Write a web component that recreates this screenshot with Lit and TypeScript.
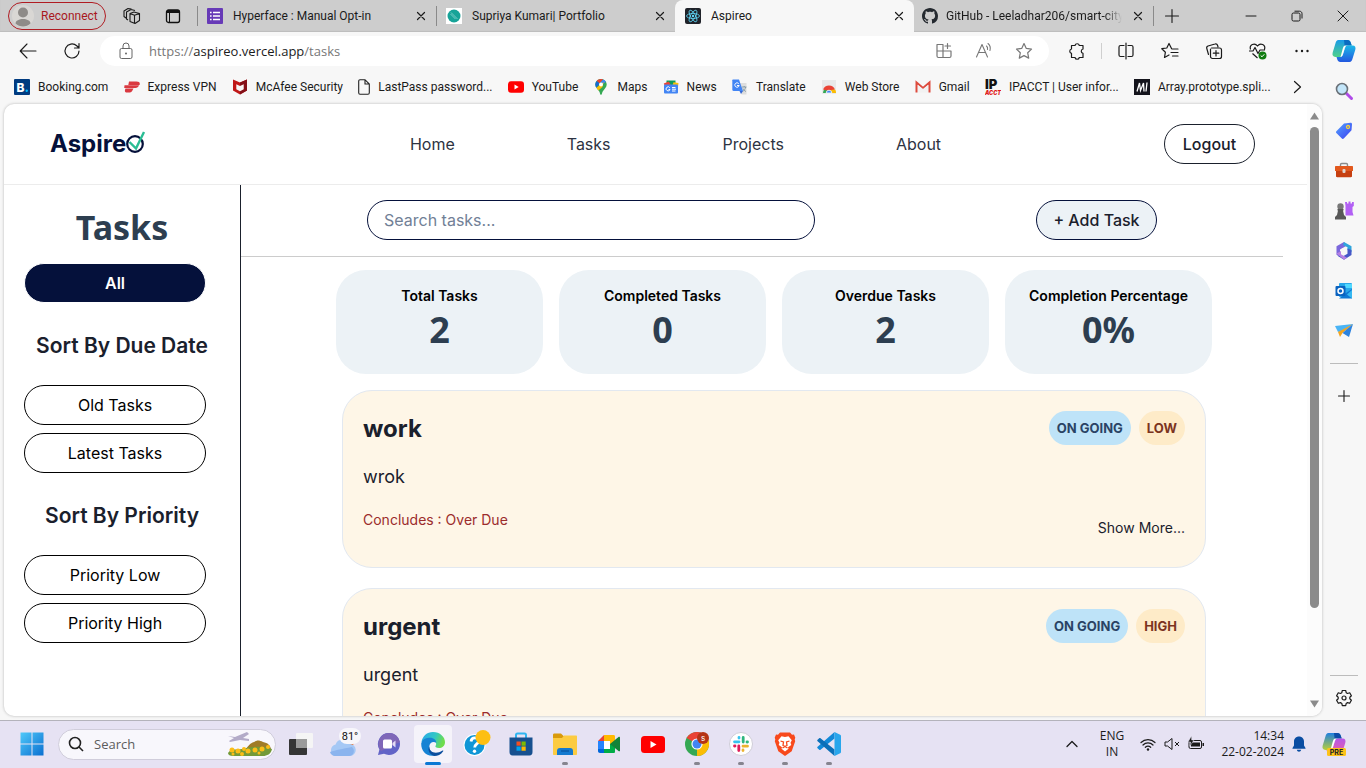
import { LitElement, html, css, svg, TemplateResult } from "lit";
import { customElement, property } from "lit/decorators.js";

const icon = (w: number, h: number, vb: string, body: unknown) =>
  html`<svg width=${w} height=${h} viewBox=${vb} fill="none" aria-hidden="true" style="display:block;flex:none">${body}</svg>`;
const line = (size: number, d: string, color = "#1b1b1b", vb = "0 0 20 20", sw = 1.2) =>
  icon(size, size, vb, svg`<path d=${d} stroke=${color} stroke-width=${sw} stroke-linecap="round" stroke-linejoin="round"/>`);

const closeX = () => line(16, "M4.500 4.500l7 7M11.500 4.500l-7 7", "#1b1b1b", "0 0 16 16", 1.2);

const copilot = (size: number, a: string[], extra: unknown = "") => icon(size, size, "0 0 24 24", svg`
  <defs>
    <linearGradient id="cpa" x1="0" y1="0" x2="0" y2="1"><stop offset="0" stop-color=${a[0]}/><stop offset="1" stop-color=${a[1]}/></linearGradient>
    <linearGradient id="cpb" x1="0" y1="0" x2="0" y2="1"><stop offset="0" stop-color=${a[2]}/><stop offset="1" stop-color=${a[3]}/></linearGradient>
  </defs>
  <path d="M6.500 1h9.200c1.600 0 2.500 1 3 2.400l1 3.100h-3.400c-2 0-2.900.8-3.500 2.600l-2 6.400c-.6 1.800-1.600 2.500-3.300 2.500H3.400C.8 18 0 15.900.7 13.600L3.500 4.200C4 2.300 4.700 1 6.500 1z" fill="url(#cpa)"/>
  <path d="M12 1h3.700c1.600 0 2.500 1 3 2.400l1 3.100h-3.400c-2 0-2.900.8-3.500 2.600z" fill=${a[4]}/>
  <path d="M17.500 23H8.300c-1.600 0-2.500-1-3-2.400L4.500 18h3c1.700 0 2.700-.7 3.300-2.500l2-6.400c.6-1.800 1.500-2.600 3.500-2.600h4.300c2.600 0 3.400 2 2.700 4.300l-2.800 9C20 21.700 19.300 23 17.500 23z" fill="url(#cpb)"/>
  <path d="M12.800 6.500h3.600c-2 0-2.900.8-3.500 2.600l-2 6.400c-.5 1.600-1.200 2.300-2.400 2.500l2.300-8.500c.5-1.600 1-2.400 2-3z" fill="#fff"/>${extra}`);

const fav = {
  forms: icon(16, 16, "0 0 16 16", svg`<rect width="16" height="16" rx="1" fill="#673ab7"/><path d="M3 4.500h1.600M3 8h1.600M3 11.500h1.600M6 4.500h7M6 8h7M6 11.500h7" stroke="#fff" stroke-width="1.500"/>`),
  portfolio: icon(16, 16, "0 0 16 16", svg`<rect width="16" height="16" fill="#fff"/><circle cx="8" cy="8" r="6.500" fill="#17a398"/><path d="M5 4.500l6.500 6.500M4.500 6l5 5" stroke="#8fd8d2" stroke-width=".8"/>`),
  react: icon(16, 16, "0 0 16 16", svg`<rect width="16" height="16" rx="2" fill="#20232a"/><g stroke="#61dafb" stroke-width=".8"><ellipse cx="8" cy="8" rx="6.500" ry="2.500"/><ellipse cx="8" cy="8" rx="6.500" ry="2.500" transform="rotate(60 8 8)"/><ellipse cx="8" cy="8" rx="6.500" ry="2.500" transform="rotate(120 8 8)"/></g><circle cx="8" cy="8" r="1.200" fill="#61dafb"/>`),
  github: icon(16, 16, "0 0 16 16", svg`<path fill="#24292f" d="M8 0C3.580 0 0 3.580 0 8c0 3.540 2.290 6.530 5.470 7.590.4.070.55-.17.55-.38 0-.19-.01-.82-.01-1.490-2.010.37-2.530-.49-2.690-.94-.09-.23-.48-.94-.82-1.130-.28-.15-.68-.52-.01-.53.63-.01 1.080.58 1.230.82.72 1.210 1.870.87 2.330.66.070-.52.28-.87.51-1.070-1.780-.2-3.640-.89-3.640-3.950 0-.87.31-1.590.82-2.150-.08-.2-.36-1.020.08-2.120 0 0 .67-.21 2.200.82.64-.18 1.320-.27 2-.27s1.360.09 2 .27c1.530-1.040 2.200-.82 2.200-.82.44 1.100.16 1.920.08 2.120.51.56.82 1.270.82 2.150 0 3.070-1.870 3.750-3.650 3.950.29.25.54.73.54 1.480 0 1.070-.01 1.930-.01 2.200 0 .21.15.46.55.38A8 8 0 0 0 16 8c0-4.420-3.580-8-8-8z"/>`),
};

const bm: Array<[string, TemplateResult]> = [
  ["Booking.com", icon(16, 16, "0 0 16 16", svg`<rect width="16" height="16" rx="1" fill="#003b80"/><text x="2.500" y="12.500" font-family="Inter, sans-serif" font-size="12" font-weight="800" fill="#fff">B</text><circle cx="12.700" cy="11.700" r="1.200" fill="#00baff"/>`)],
  ["Express VPN", icon(16, 16, "0 0 16 16", svg`<path d="M5 2.500h7.500c3 0 3.800 1.500 3 3.500H4.300zM.5 6.200H15c-.6 1.900-1.800 2.700-3.600 2.700H.2zM1.500 9.500h8c-1 1.500-1.500 3.800-3.500 4H3C.5 13.500.5 11.500 1.500 9.500z" fill="#da3940"/>`)],
  ["McAfee Security", icon(16, 16, "0 0 16 16", svg`<path d="M1 .5l7 3 7-3v11L8 15.500l-7-4z" fill="#c01818"/><path d="M8 3.500l7-3v11L8 15.500V12l3.500-1.800V5.500L8 7.200z" fill="#841018"/><path d="M4.300 5.200L8 7l3.700-1.800v5L8 12.200l-3.700-2z" fill="#f7f7f7"/>`)],
  ["LastPass password...", icon(12, 16, "0 0 12 16", svg`<path d="M2 .7h5l4.300 4.300v8.800c0 .9-.5 1.500-1.300 1.500H2c-.8 0-1.300-.6-1.300-1.500V2.200C.7 1.300 1.200.7 2 .7zM7 .7V5h4.300" stroke="#222" stroke-width="1.100"/>`)],
  ["YouTube", icon(16, 16, "0 0 16 16", svg`<rect y="2.300" width="16" height="11.400" rx="3" fill="#f00"/><path d="M6.500 5.500v5l4.200-2.500z" fill="#fff"/>`)],
  ["Maps", icon(16, 16, "0 0 16 16", svg`<path d="M8 0C4.600 0 2.300 2.600 2.300 5.600c0 3 2.300 4.200 4 7 .7 1.200.8 3.400 1.700 3.400s1-2.200 1.700-3.400c1.700-2.800 4-4 4-7C13.700 2.600 11.400 0 8 0z" fill="#34a853"/><path d="M8 0C6.300 0 4.700.7 3.700 1.900l3 2.600L10 .4C9.400.1 8.700 0 8 0z" fill="#ea4335"/><path d="M10 .4L6.700 4.500 10 5l3-2.300C12.300 1.600 11.300.8 10 .4z" fill="#4285f4"/><path d="M3.700 1.900C1.800 4.200 2 6.500 3.400 8.800l3.300-4.300z" fill="#1967d2"/><path d="M3.400 8.800L10.500 3l-1 5-4.200 3.500z" fill="#fbbc04"/><circle cx="8" cy="5.500" r="2" fill="#fff"/>`)],
  ["News", icon(16, 16, "0 0 16 16", svg`<path d="M3.500 1.500h9V8h-9z" fill="#0c9d58"/><path d="M.8 4.500l5-2 3 5H2z" fill="#ea4335"/><path d="M15.500 4l-5-.8L9 8h6z" fill="#ffc107"/><rect x="1" y="5.500" width="14" height="9" rx="1" fill="#4285f4"/><path d="M6.800 8.800a2 2 0 1 0 .2 1.700H5.500M9 8.500h3.500M9 10.200h4M9 12h3.500" stroke="#fff"/>`)],
  ["Translate", icon(16, 16, "0 0 16 16", svg`<path d="M7 4h7.500v11.500H9.500z" fill="#dedede"/><path d="M10 8h4.500M12.200 7v1M13.700 8c-.5 2-1.500 3.500-3 4.500M11 9.500c.6 1.400 1.700 2.500 3 3" stroke="#78909c" stroke-width=".8"/><path d="M1 .5h6l4 11.500H1.500C.7 12 .3 11.500.3 10.800V1.300C.3.800.5.500 1 .5z" fill="#4285f4"/><path d="M7.500 12H11l-2 3z" fill="#3367d6"/><path d="M6.800 4.700a2.200 2.200 0 1 0 .4 1.800H5" stroke="#fff" stroke-width="1"/>`)],
  ["Web Store", icon(16, 16, "0 0 16 16", svg`<rect x="1" y="1" width="14" height="14" fill="#e9e9e9"/><path d="M2 14a6 6 0 0 1 12 0z" fill="#34a853"/><path d="M2 10.500a6.500 6.500 0 0 1 12 0L8 12z" fill="#ea4335"/><path d="M14 10.500c.8 1 1 2 1 3.500H9l1-3z" fill="#fbbc04"/><path d="M5.200 14a2.800 2.800 0 0 1 5.600 0z" fill="#4285f4" stroke="#fff" stroke-width=".8"/>`)],
  ["Gmail", icon(16, 16, "0 0 16 16", svg`<path d="M1.500 13.500v-10L8 9l6.500-5.500v10" stroke="#dd4b3e" stroke-width="2"/><path d="M3 13.500V6l5 4 5-4v7.500z" fill="#f2f2f2"/>`)],
  ["IPACCT | User infor...", icon(16, 16, "0 0 16 16", svg`<text x="0" y="10" font-family="Inter, sans-serif" font-size="13" font-weight="900" fill="#111">IP</text><text x="0" y="15.800" font-family="Inter, sans-serif" font-size="5.500" font-style="italic" font-weight="900" fill="#e01818">ACCT</text>`)],
  ["Array.prototype.spli...", icon(16, 16, "0 0 16 16", svg`<rect width="16" height="16" fill="#14141c"/><path d="M3 12.500L5.500 4l1 7.500L9.500 4l.5 8.500M13 3.500l-1 9" stroke="#fff" stroke-width="1.300"/>`)],
];

const side = [
  icon(20, 20, "0 0 20 20", svg`<path d="M12 12l5.500 5.500" stroke="#b04be8" stroke-width="3" stroke-linecap="round"/><circle cx="8" cy="8" r="5.500" fill="#c3e6fa" stroke="#6a7178" stroke-width="1.600"/>`),
  icon(20, 20, "0 0 20 20", svg`<defs><linearGradient id="tg" x1="0" y1="0" x2="1" y2="1"><stop stop-color="#55a4ff"/><stop offset="1" stop-color="#3b3ff0"/></linearGradient></defs><path d="M10 2.500l6.500-.7c1 0 1.500.5 1.500 1.500l-.5 6-7.500 8c-.8.8-1.600.8-2.400 0l-5-5c-.8-.8-.8-1.600 0-2.400z" fill="url(#tg)"/><circle cx="14" cy="6" r="1.500" fill="#4a5ff0" stroke="#f6d53a" stroke-width="1.300"/>`),
  icon(20, 20, "0 0 20 20", svg`<path d="M6.500 6V3.700c0-.7.5-1.200 1.200-1.200h4.600c.7 0 1.200.5 1.200 1.200V6" stroke="#8b8b8b" stroke-width="1.400"/><path d="M2 5h16c.6 0 1 .4 1 1v4H1V6c0-.6.4-1 1-1z" fill="#e2581d"/><path d="M2 10h16v5c0 .8-.5 1.200-1.200 1.200H3.200C2.500 16.200 2 15.800 2 15z" fill="#c63f10"/><rect x="8.500" y="8" width="3" height="4" rx="1" fill="#ded5cf"/>`),
  icon(20, 20, "0 0 20 20", svg`<path d="M11 1h2v1.500h1.500V.500h2v2H18V1h1.800v4l-1.300 1v5l1 3.500h-8V5z" fill="#b260f4"/><circle cx="6.500" cy="5.500" r="3.200" fill="#777"/><path d="M3.500 8h6v1.500H9l1 4.500 2 2v2.500H1V16l2-2 1-4.500h-.5z" fill="#585858"/>`),
  icon(20, 20, "0 0 20 20", svg`<path d="M10 1L2.500 5.300v8.500L6 16V8.500L13 4.500z" fill="#7b67dc"/><path d="M10 1l7.500 4.300v6L13.500 9V6.200L9 4z" fill="#2fa5dc"/><path d="M17.500 9v5L10 18.800l-6.500-4 6 .2 4-2.200V7.500z" fill="#4557c7"/><path d="M2.500 12.500L10 18.800l3-2-6-3.600V10z" fill="#b580e3"/><circle cx="10" cy="10" r="3" fill="#f7f7f7"/>`),
  icon(20, 20, "0 0 20 20", svg`<rect x="5" y="2" width="13" height="14" rx="1" fill="#28a8ea"/><path d="M11 3h7v4h-7z" fill="#50d9ff"/><path d="M12 12l6-4v9.500H5z" fill="#0f78d4"/><path d="M18 9v8.500l-5-4z" fill="#35b8f1"/><rect x="1.500" y="5" width="10" height="10" rx="1" fill="#0a63c0"/><circle cx="6.500" cy="10" r="2.500" stroke="#fff" stroke-width="1.500"/>`),
  icon(20, 20, "0 0 20 20", svg`<path d="M1 5l18-2-7 6-8 2z" fill="#4ab4f5"/><path d="M4 11L19 3 8.500 12l-2.500 4z" fill="#f5a51f"/><path d="M8.500 12L19 3l-4 13z" fill="#2c83e0"/>`),
];

const edgeLogo = icon(24, 24, "0 0 24 24", svg`<defs><linearGradient id="eg" x1="0" y1="0" x2="1" y2="0.300"><stop stop-color="#2aa5ec"/><stop offset=".6" stop-color="#30c7c5"/><stop offset="1" stop-color="#6fdd4d"/></linearGradient></defs><path d="M.5 10C1.500 4 6 0 12 0c7 0 12 5 12 10 0 4-3 6-6 6-3 0-4-1.200-3.500-2 2-2.500-.5-6-4.500-6C5.500 8 2 9 .5 10z" fill="url(#eg)"/><path d="M.2 11.500C1.500 6.500 6 5.800 9 5.800c4 0 6.500 2.700 6.300 5C12 8.500 8 11 8.300 15c.3 4.500 4.700 8 9.200 7C8 27 0 21 .2 11.500z" fill="#1683d4"/><path d="M8.300 14.500c-.5 5.500 6.500 8.500 13.200 4 .6-.3 1 .2.7.7C20 22.500 16.500 24 13.500 24 9 23 6 18 8.300 14.500z" fill="#0c4f9e"/>`);

const taskApps: Array<[string, TemplateResult, boolean]> = [
  ["Task view", icon(24, 24, "0 0 24 24", svg`<rect x="7" y="1" width="17" height="15" rx="1" fill="#f5f5f5"/><rect y="7" width="18" height="16" rx="1" fill="#363636"/><path d="M7 7h11v9H7z" fill="#9b9b9b"/>`), false],
  ["Get help", icon(28, 28, "0 0 28 28", svg`<circle cx="11.500" cy="15" r="11" fill="#fff"/><circle cx="11.500" cy="15" r="10" fill="#0f96d6"/><path d="M8 11.500c.5-5 8-4.500 7.500 0-.3 2.500-3.800 2.500-3.800 6" stroke="#fff" stroke-width="2.800"/><circle cx="11.500" cy="21.300" r="1.700" fill="#fff"/><circle cx="20" cy="7.500" r="7.500" fill="#fdbf12"/>`), false],
  ["Store", icon(24, 24, "0 0 24 24", svg`<path d="M7 6V3c0-1 .5-1.500 1.500-1.500h7c1 0 1.500.5 1.500 1.500v3" stroke="#2fb5f0" stroke-width="2"/><path d="M.5 5.500h23V20c0 2-1 3.500-3 3.500h-17c-2 0-3-1.500-3-3.500z" fill="#17508f"/><path d="M7.500 9.500h4.200v4.200H7.500z" fill="#f25022"/><path d="M12.500 9.500h4.200v4.200h-4.200z" fill="#7fba00"/><path d="M7.500 14.500h4.200v4.200H7.500z" fill="#00a4ef"/><path d="M12.500 14.500h4.200v4.200h-4.200z" fill="#ffb900"/>`), false],
  ["File Explorer", icon(24, 24, "0 0 24 24", svg`<path d="M0 3c0-1 .5-1.500 1.500-1.500H8L10.500 4H22v6H0z" fill="#d99a0b"/><path d="M0 6h9l2-2.500h12c.6 0 1 .4 1 1V22c0 .6-.4 1-1 1H1c-.6 0-1-.4-1-1z" fill="#fccb41"/><path d="M4 23v-4c0-2 1-3 3-3h10c2 0 3 1 3 3v4z" fill="#1479cf"/><path d="M8 19h8" stroke="#0a5ba8" stroke-width="1.500"/>`), true],
  ["Meet", icon(24, 24, "0 0 24 24", svg`<path d="M1 9l6-6v6z" fill="#ea4335"/><path d="M1 9h6v8H1z" fill="#2684fc"/><path d="M1 17h6v4H3c-1.200 0-2-.8-2-2z" fill="#0066da"/><path d="M7 3h9.500c1 0 1.500.6 1.500 1.500V12h-5V9H7z" fill="#ffba00"/><path d="M7 17h6v-5h5v7.500c0 1-.5 1.500-1.500 1.500H7z" fill="#00ac47"/><path d="M13 12l8.500-7c.8-.6 1.500-.3 1.500.6v12.800c0 .9-.7 1.200-1.500.6z" fill="#128338"/><path d="M7 9h6v8H7z" fill="#fff"/>`), false],
  ["YouTube", icon(24, 24, "0 0 24 24", svg`<rect y="4" width="24" height="17" rx="3.500" fill="#f00"/><path d="M9.500 9v7l6-3.500z" fill="#fff"/>`), false],
  ["Chrome", icon(24, 24, "0 0 24 24", svg`<circle cx="12" cy="12" r="12" fill="#34a853"/><path d="M12 12L1.600 6A12 12 0 0 1 22.400 6z" fill="#ea4335"/><path d="M12 12l10.400-6A12 12 0 0 1 12 24z" fill="#fbbc04"/><circle cx="12" cy="12" r="5.600" fill="#fff"/><circle cx="12" cy="12" r="4.500" fill="#4285f4"/><circle cx="18" cy="6" r="6" fill="#b53416"/><text x="18" y="9" text-anchor="middle" font-size="8" font-family="Inter, sans-serif" fill="#fff">s</text>`), true],
  ["Slack", icon(24, 24, "0 0 24 24", svg`<circle cx="12" cy="12" r="11.500" fill="#fff" stroke="#cfcdd8"/><g stroke-width="2.800" stroke-linecap="round"><path d="M10 9.800H5.500M10 5.500v.5" stroke="#36c5f0"/><path d="M14.200 10V5.500M18.500 10H18" stroke="#2eb67d"/><path d="M14 14.200h4.500M14 18.500V18" stroke="#ecb22e"/><path d="M9.800 14v4.500M5.500 14H6" stroke="#e01e5a"/></g>`), true],
  ["Brave", icon(24, 24, "0 0 24 24", svg`<path d="M7 .5h10l2 2.200 2-.2 1.300 3.200-.6 1.800.5 1.800-3.500 10L12 24l-6.700-4.700-3.500-10 .5-1.800-.6-1.800L3 2.500l2 .2z" fill="#f8491c"/><path d="M12 5l3.500-.8 3.300 4-1.300 2.500.8 2.300-3.300 2.300.5 1.500L12 19.500l-3.500-2.700.5-1.500L5.700 13l.8-2.300-1.300-2.500 3.300-4z" fill="#fff"/><path d="M7.500 9l3 1-.5 3.500 2 1 2-1-.5-3.500 3-1M9.500 16l2.500-1.500 2.500 1.500" stroke="#f8491c" stroke-width="1.300"/>`), true],
  ["Visual Studio Code", icon(24, 24, "0 0 24 24", svg`<path d="M17.500 0v6.500L3.500 17.800c-.4.300-.9.300-1.300 0L.6 16.300c-.5-.4-.5-1.100 0-1.500z" fill="#1289d8"/><path d="M17.500 24v-6.500L3.500 6.200c-.4-.3-.9-.3-1.300 0L.6 7.700c-.5.4-.5 1.100 0 1.500z" fill="#0b6fb8"/><path d="M17.500 0l5.700 2.800c.5.200.8.700.8 1.300v15.800c0 .6-.3 1.100-.8 1.300L17.500 24z" fill="#28a6ec"/>`), true],
];

const weather = icon(32, 32, "0 0 32 32", svg`<circle cx="21" cy="14" r="4" fill="#f07f3c"/><path d="M6 28a6 6 0 0 1 .6-11.500A7.500 7.500 0 0 1 20.500 16 6 6 0 0 1 21 28z" fill="#a5c8f5"/><path d="M1 24c6-2 12-3 22-5 4 4 1 9-3 9H6c-2.500 0-4.500-2-5-4z" fill="#8bb4ee"/><rect x="10" y="0" width="22" height="16" rx="8" fill="#f7f6fb"/><text x="21" y="12" text-anchor="middle" font-size="11" font-family="Roboto, sans-serif" fill="#111">81°</text>`);
const chat = icon(24, 24, "0 0 24 24", svg`<path d="M12 1a11 11 0 1 1-5 20.800L1 23l1.400-5.500A11 11 0 0 1 12 1z" fill="#6264c7"/><path d="M12 1a11 11 0 0 1 11 9L4 19a11 11 0 0 1 8-18z" fill="#7f67b8"/><rect x="6" y="7.500" width="9" height="9" rx="1.500" fill="#fff"/><path d="M15.500 11l3-2.500v7l-3-2.500z" fill="#e3dcf5"/>`);

@customElement("task-card")
export class TaskCard extends LitElement {
  @property() heading = "";
  @property() description = "";
  @property() priority = "";

  static styles = css`
    :host { display: block; }
    * { box-sizing: border-box; }
    .card { display: flex; justify-content: space-between; min-height: 178px; padding: 20px; border: 1px solid #e2e8f0; border-radius: 30px; background: #fef6e7; }
    h2 { margin: 0 0 16px; font-size: 24px; line-height: 36px; font-weight: 700; }
    p { margin: 0 0 20px; font-size: 18px; line-height: 27px; }
    .due { font-size: 14px; line-height: 20px; color: #9b2c2c; }
    .right { display: flex; flex-direction: column; justify-content: space-between; align-items: flex-end; padding-bottom: 9px; }
    .badges { display: flex; gap: 8px; }
    .badge { padding: 0 8px; border-radius: 17px; font-size: 13px; line-height: 34px; font-weight: 700; text-align: center; text-transform: uppercase; }
    .status { background: #bee3f8; color: #2a4365; }
    .prio { background: #feebc8; color: #7b341e; }
    button { padding: 0; border: 0; background: none; font: inherit; font-size: 14px; line-height: 20px; color: inherit; }
  `;

  render() {
    return html`<article class="card">
      <div>
        <h2>${this.heading}</h2>
        <p>${this.description}</p>
        <div class="due">Concludes : Over Due</div>
      </div>
      <div class="right">
        <div class="badges"><span class="badge status">On going</span><span class="badge prio">${this.priority}</span></div>
        <button type="button">Show More...</button>
      </div>
    </article>`;
  }
}

@customElement("aspireo-page")
export class AspireoPage extends LitElement {
  static styles = css`
    :host { display: flex; min-height: 0; background: #fff; border-radius: 10px; overflow: hidden; box-shadow: 0 0 3px #b5b5b5; font-family: Inter, "Noto Sans", sans-serif; color: #1a202c; }
    * { box-sizing: border-box; }
    .view { flex: 1; min-width: 0; overflow: hidden; display: flex; flex-direction: column; }
    .nav { display: flex; flex: none; align-items: center; justify-content: space-between; height: 81px; padding: 0 52px 0 46px; border-bottom: 1px solid #ececec; }
    .logo { display: flex; align-items: center; width: 137px; font-weight: 700; font-size: 24px; line-height: 30px; color: #05103a; text-decoration: none; }
    .links { display: flex; gap: 112px; }
    .links a { font-size: 16px; line-height: 24px; color: #2d3342; text-decoration: none; }
    button, input { font: inherit; font-size: 16px; height: 40px; border: 1px solid #1a202c; border-radius: 20px; color: inherit; }
    button { padding: 0 16px; background: #fff; }
    .logout { min-width: 91px; font-weight: 500; }
    .body { display: flex; flex: 1; min-height: 0; }
    aside { flex: 0 0 237px; border-right: 1px solid #1a202c; padding: 15px 0 0; }
    h1 { margin: 0 0 9px; text-align: center; font: 700 34px/54px "Noto Sans", sans-serif; color: #2d3e50; }
    h3 { margin: 28px 0 24px; text-align: center; font-size: 21px; line-height: 30px; font-weight: 600; }
    .filters { display: flex; flex-direction: column; gap: 8px; padding: 0 34px 0 20px; }
    .filters button { border-color: #000; color: #000; }
    .filters .all { border-color: #fff; background: #05113b; color: #fff; font-weight: 600; }
    main { flex: 1; min-width: 0; }
    .tools { display: flex; align-items: center; justify-content: space-between; margin-right: 24px; padding: 15px 126px 16px; border-bottom: 1px solid #ccc; }
    input { flex: 0 1 448px; min-width: 0; padding: 0 16px; border-color: #05113b; background: #fff; outline: none; }
    input::placeholder { color: #718096; opacity: 1; }
    .add { min-width: 121px; background: #ecf2f6; border-color: #05113b; font-weight: 500; }
    .stats { display: grid; grid-template-columns: repeat(4, 1fr); gap: 16px; max-width: 876px; margin: 13px auto 16px; }
    .stat { min-height: 104px; padding: 16px 8px 0; border-radius: 30px; background: #ecf2f6; text-align: center; }
    .label { font-size: 14px; line-height: 20px; font-weight: 600; color: #000; white-space: nowrap; }
    .value { font: 700 36px/48px "Noto Sans", sans-serif; color: #2d3e50; }
    .list { display: flex; flex-direction: column; gap: 20px; max-width: 864px; margin: 0 auto; }
    .bar { display: flex; flex-direction: column; align-items: center; flex: 0 0 15px; background: #fcfcfc; padding: 8px 0; }
    .track { flex: 1; width: 9px; margin: 7px 0; }
    .thumb { height: 85%; border-radius: 5px; background: #8b8b8b; }
  `;

  render() {
    const stats = [["Total Tasks", "2"], ["Completed Tasks", "0"], ["Overdue Tasks", "2"], ["Completion Percentage", "0%"]];
    return html`
      <div class="view">
        <header class="nav">
          <a class="logo" href="#">Aspire${icon(20, 28, "0 0 20 28", svg`<circle cx="9" cy="14" r="7.800" stroke="#05103a" stroke-width="2.200"/><path d="M3.500 12l6.500 6.500L18 2" stroke="#2bbd94" stroke-width="2.400"/>`)}</a>
          <nav class="links"><a href="#">Home</a><a href="#">Tasks</a><a href="#">Projects</a><a href="#">About</a></nav>
          <button class="logout" type="button">Logout</button>
        </header>
        <div class="body">
          <aside>
            <h1>Tasks</h1>
            <div class="filters"><button class="all" type="button">All</button></div>
            <h3>Sort By Due Date</h3>
            <div class="filters"><button type="button">Old Tasks</button><button type="button">Latest Tasks</button></div>
            <h3>Sort By Priority</h3>
            <div class="filters"><button type="button">Priority Low</button><button type="button">Priority High</button></div>
          </aside>
          <main>
            <div class="tools">
              <input type="search" aria-label="Search tasks" placeholder="Search tasks..." />
              <button class="add" type="button">+ Add Task</button>
            </div>
            <section class="stats">
              ${stats.map(([l, v]) => html`<div class="stat"><div class="label">${l}</div><div class="value">${v}</div></div>`)}
            </section>
            <section class="list">
              <task-card heading="work" description="wrok" priority="Low"></task-card>
              <task-card heading="urgent" description="urgent" priority="High"></task-card>
            </section>
          </main>
        </div>
      </div>
      <div class="bar" aria-hidden="true">
        ${icon(9, 8, "0 0 9 8", svg`<path d="M4.500.5L9 7.500H0z" fill="#8b8b8b"/>`)}
        <div class="track"><div class="thumb"></div></div>
        ${icon(9, 8, "0 0 9 8", svg`<path d="M4.500 7.500L9 .5H0z" fill="#8b8b8b"/>`)}
      </div>`;
  }
}

@customElement("task-bar")
export class TaskBar extends LitElement {
  static styles = css`
    :host { display: flex; align-items: center; justify-content: space-between; height: 48px; box-sizing: border-box; box-shadow: inset 0 1px #b4b3bb; background: #e6e2f3; padding: 0 20px 0 10px; color: #1b1b1b; font: 12px/16px "Open Sans", "Noto Sans", sans-serif; }
    * { box-sizing: border-box; }
    .group { display: flex; align-items: center; }
    button { display: flex; flex: none; align-items: center; justify-content: center; padding: 0; border: 0; background: none; font: inherit; color: inherit; }
    .app { position: relative; width: 44px; height: 44px; }
    .app.active::before { content: ""; position: absolute; inset: 3px; border-radius: 4px; background: #f5f3fa; z-index: -1; }
    .active { isolation: isolate; }
    .app.run::after { content: ""; position: absolute; bottom: 1px; left: 19px; width: 6px; height: 3px; border-radius: 2px; background: #86848f; }
    .app.active::after { left: 14px; width: 16px; background: #0a78d4; }
    .search { display: flex; align-items: center; gap: 10px; width: 218px; height: 31px; margin: 0 3px 0 4px; padding: 0 2px 0 9px; border-radius: 16px; background: #f8f7fc; border: 1px solid #d0cddb; }
    input { flex: 1; min-width: 0; border: 0; padding: 0; background: none; font: 13px/20px "Open Sans", "Noto Sans", sans-serif; outline: none; }
    input::placeholder { color: #5c5c5c; opacity: 1; }
    .tray { gap: 8px; }
    .lang { display: flex; flex-direction: column; align-items: center; width: 40px; }
    .chev { margin-right: 6px; }
    .clock { display: flex; flex-direction: column; align-items: flex-end; margin-left: 8px; width: 64px; }
    .bell { margin-right: 8px; }
  `;

  render() {
    const app = (name: string, ic: TemplateResult, cls: string) => html`<button class="app ${cls}" type="button" aria-label=${name}>${ic}</button>`;
    return html`
      <div class="group">
        ${app("Start", icon(24, 24, "0 0 24 24", svg`<defs><linearGradient id="wg" x1="0" y1="0" x2="1" y2="1"><stop stop-color="#4fc9fa"/><stop offset="1" stop-color="#0a6fd0"/></linearGradient></defs><path d="M.5.500h11v11H.5zM12.500.500h11v11h-11zM.5 12.500h11v11H.5zM12.500 12.500h11v11h-11z" fill="url(#wg)"/>`), "")}
        <label class="search">
          ${icon(16, 16, "0 0 16 16", svg`<circle cx="7" cy="7" r="5.500" stroke="#222" stroke-width="1.600"/><path d="M11 11l4 4" stroke="#222" stroke-width="1.600"/>`)}
          <input type="search" aria-label="Search" placeholder="Search" />
          ${icon(46, 28, "0 0 46 28", svg`<path d="M17 22c4-6 6-9 10-10 3-2 5-2 9 0 5 1 7 3 8 7-1 5-8 6-12 6z" fill="#a07b26"/><path d="M1 23c3-5 9-3 14-4 8-2 20-4 30 0-1 5-5 7-9 7H6c-3 0-5-1-5-3z" fill="#739a38"/><path d="M1 6l7 1 12-5 2 2-6 4 6 1v2l-9-1-10 2-1-1 5-3z" fill="#b3abc8"/><g fill="#fbbd17"><circle cx="5" cy="20" r="2.500"/><circle cx="11" cy="21" r="2.500"/><circle cx="17" cy="19" r="2"/><circle cx="21" cy="21" r="2.500"/><circle cx="28" cy="20" r="2.500"/><circle cx="35" cy="19" r="2.500"/><circle cx="41" cy="17" r="2"/><circle cx="15" cy="24" r="2"/><circle cx="32" cy="23" r="1.500"/><circle cx="6" cy="24" r="1.500"/></g>`)}
        </label>
        ${app(taskApps[0][0], taskApps[0][1], "")}
        ${app("Weather", weather, "")}
        ${app("Chat", chat, "")}
        ${app("Edge", edgeLogo, "run active")}
        ${taskApps.slice(1).map(([n, i, r]) => app(n, i, r ? "run" : ""))}
      </div>
      <div class="group tray">
        <button class="chev" type="button" aria-label="Show hidden icons">${line(12, "M1 8.500l5-5 5 5", "#1b1b1b", "0 0 12 12", 1.300)}</button>
        <div class="lang"><span>ENG</span><span>IN</span></div>
        ${icon(16, 16, "0 0 16 16", svg`<path d="M1 6.500a10 10 0 0 1 14 0M3 9a7 7 0 0 1 10 0M5.300 11.300a4 4 0 0 1 5.400 0" stroke="#1b1b1b" stroke-width="1.200" stroke-linecap="round"/><circle cx="8" cy="13.500" r="1.200" fill="#1b1b1b"/>`)}
        ${icon(16, 16, "0 0 16 16", svg`<path d="M1 6h2.500L8 2.500v11L3.500 10H1zM11 6l4 4M15 6l-4 4" stroke="#1b1b1b"/>`)}
        ${icon(16, 16, "0 0 16 16", svg`<rect x="1" y="4.500" width="12.500" height="8" rx="1.500" stroke="#1b1b1b"/><path d="M3 6.500h9v4H3zM14.500 7H16v3h-1.500z" fill="#1b1b1b"/><path d="M3.500 0L0 6h2.500L2 10l4-6H3.700z" fill="#1b1b1b" stroke="#e6e2f3" stroke-width=".5"/>`)}
        <div class="clock"><span>14:34</span><span>22-02-2024</span></div>
        <button class="bell" type="button" aria-label="Notifications">${icon(14, 16, "0 0 14 16", svg`<path d="M7 .5c3 0 5 2.200 5 5v4l1.500 2.500v.8H.5V12L2 9.500v-4C2 2.700 4 .5 7 .5zM4.800 13.800h4.400C9 15 8 15.700 7 15.700s-2-.7-2.200-1.900z" fill="#0a4da2"/>`)}</button>
        <button type="button" aria-label="Copilot preview">${copilot(24, ["#1f7fe0", "#b8cf38", "#b558e8", "#f0609e", "#0d4da8"], svg`<rect x="5" y="16" width="19" height="8" rx="1.500" fill="#fdc31a"/><text x="14.500" y="22.500" text-anchor="middle" font-size="7" font-weight="700" font-family="Inter, sans-serif" fill="#222">PRE</text>`)}</button>
      </div>`;
  }
}

@customElement("app-root")
export class AppRoot extends LitElement {
  static styles = css`
    :host { display: flex; flex-direction: column; height: 100vh; overflow: hidden; background: #f7f7f7; color: #1b1b1b; font: 12px/16px Roboto, "Noto Sans", sans-serif; }
    * { box-sizing: border-box; }
    button { display: flex; flex: none; align-items: center; justify-content: center; padding: 0; border: 0; background: none; font: inherit; color: inherit; }
    .titlebar { display: flex; flex: none; height: 32px; background: #cdcdcd; box-shadow: inset 0 -1px 1px #bdbdbd; }
    .left { display: flex; flex: 0 0 197px; align-items: center; padding-left: 8px; }
    .profile { gap: 7px; justify-content: flex-start; width: 98px; height: 28px; margin-right: 17px; padding-left: 3px; border: 1px solid #b01c22; border-radius: 14px; color: #a8181e; }
    .left .stack { margin-right: 24px; }
    .tab { display: flex; flex: 0 1 239px; min-width: 0; align-items: center; gap: 10px; padding: 0 7px 0 11px; }
    .tab::before { content: ""; flex: 0 0 1px; height: 20px; margin-left: -11px; margin-right: -1px; background: #8a8a8a; }
    .tab.active { background: #f7f7f7; border-radius: 8px 8px 0 0; }
    .tab.active::before, .tab.active + .tab::before { background: none; }
    .tab span { flex: 1; min-width: 0; overflow: hidden; white-space: nowrap; }
    .tab.fade { gap: 8px; }
    .tab.fade span { mask-image: linear-gradient(90deg, #000 90%, transparent); }
    .new { width: 36px; border-left: 1px solid #8a8a8a; height: 20px; align-self: center; }
    .window { display: flex; margin-left: auto; }
    .window button { width: 46px; }
    .frame { display: flex; flex: 1; min-height: 0; }
    .column { display: flex; flex: 1; flex-direction: column; min-width: 0; }
    .toolbar { display: flex; flex: none; align-items: center; height: 38px; padding-left: 6px; }
    .toolbar > button { width: 44px; height: 32px; }
    .address { display: flex; flex: 1; align-items: center; gap: 15px; height: 30px; margin: 0 8px 0 6px; padding: 0 15px 0 18px; border-radius: 15px; background: #fff; min-width: 0; }
    .actions { display: flex; gap: 20px; }
    .url { flex: 1; min-width: 0; font-family: "Open Sans", "Noto Sans", sans-serif; font-size: 13px; color: #777; white-space: nowrap; }
    .url b { font-weight: 400; color: #1b1b1b; }
    .tools { display: flex; flex: none; align-items: center; gap: 4px; }
    .tools button { width: 40px; }
    .sep { width: 1px; height: 16px; background: #cfcfcf; }
    .bookmarks { display: flex; flex: none; align-items: center; justify-content: space-between; height: 34px; padding: 0 18px 0 14px; }
    .bookmarks a { display: flex; align-items: center; gap: 8px; color: inherit; text-decoration: none; white-space: nowrap; }
    .bookmarks button { margin-left: 4px; }
    aspireo-page { flex: 1; margin: 0 0 4px 4px; }
    .side { display: flex; flex: 0 0 44px; flex-direction: column; align-items: center; gap: 20px; padding-top: 7px; padding-bottom: 13px; }
    .side .rule { width: 28px; height: 1px; background: #bcbcbc; }
    .side .rule.first { margin: 2px 0 5px; }
    .side .rule.last { margin-top: auto; margin-bottom: -7px; }
    .copilot { margin-bottom: -2px; }
  `;

  render() {
    const tab = (name: string, ic: TemplateResult, cls = "") =>
      html`<div class="tab ${cls}">${ic}<span>${name}</span><button type="button" aria-label="Close tab">${closeX()}</button></div>`;
    return html`
      <div class="titlebar">
        <div class="left">
          <button class="profile" type="button">${icon(22, 22, "0 0 22 22", svg`<circle cx="11" cy="11" r="11" fill="#d9d7d4"/><circle cx="11" cy="7.500" r="5" fill="#8e8b88"/><path d="M3.500 18.500c0-6 15-6 15 0-4 4-11 4-15 0z" fill="#8e8b88"/>`)}Reconnect</button>
          <button class="stack" type="button" aria-label="Workspaces">${icon(18, 18, "0 0 18 18", svg`<path d="M7 6.500l4-1.500 5.500 1.500v7L12 16.500l-5-2zM7 6.500l4.500 1.800 5-1.800M11.500 8.300v8M5 13l-1.500-1V5L8 2.500l4 1M3 11L1 9.500V4L5 1.500l3.500.5" stroke="#1b1b1b" stroke-width="1.100" stroke-linejoin="round"/>`)}</button>
          <button type="button" aria-label="Tab actions">${icon(16, 16, "0 0 16 16", svg`<rect x="1.500" y="2" width="13" height="12.500" rx="2" stroke="#111" stroke-width="1.300"/><path d="M1.500 4c0-1.500 1-2 2-2h9c1 0 2 .5 2 2v1h-13z" fill="#111"/><path d="M4.500 5v9" stroke="#111"/>`)}</button>
        </div>
        ${tab("Hyperface : Manual Opt-in", fav.forms)}
        ${tab("Supriya Kumari| Portfolio", fav.portfolio)}
        ${tab("Aspireo", fav.react, "active")}
        ${tab("GitHub - Leeladhar206/smart-city", fav.github, "fade")}
        <button class="new" type="button" aria-label="New tab">${line(16, "M8 1.500v13M1.500 8h13", "#1b1b1b", "0 0 16 16", 1.100)}</button>
        <div class="window">
          <button type="button" aria-label="Minimise">${line(12, "M1 6h10", "#1b1b1b", "0 0 12 12", 1)}</button>
          <button type="button" aria-label="Restore">${icon(12, 12, "0 0 12 12", svg`<rect x="1" y="3" width="8" height="8" rx="1.500" stroke="#1b1b1b"/><path d="M3.500 1.200h5c1.500 0 2.500 1 2.500 2.500v4.800" stroke="#1b1b1b"/>`)}</button>
          <button type="button" aria-label="Close">${line(12, "M1 1l10 10M11 1L1 11", "#1b1b1b", "0 0 12 12", 1)}</button>
        </div>
      </div>
      <div class="frame">
        <div class="column">
          <div class="toolbar">
            <button type="button" aria-label="Back">${line(18, "M17 9H1.500M8 2L1.200 9 8 16", "#1b1b1b", "0 0 18 18", 1.100)}</button>
            <button type="button" aria-label="Refresh">${line(18, "M16 9a7 7 0 1 1-2.300-5.200L16 6M16 1.500V6h-4.500", "#1b1b1b", "0 0 18 18", 1.200)}</button>
            <div class="address">
              ${icon(16, 18, "0 0 16 18", svg`<rect x="2" y="6.500" width="12" height="10" rx="1.500" stroke="#666"/><path d="M5 6.500V4a3 3 0 0 1 6 0v2.500" stroke="#666"/><circle cx="8" cy="11.500" r="1" fill="#666"/>`)}
              <div class="url">https://<b>aspireo.vercel.app</b>/tasks</div>
              <div class="actions">
                ${line(20, "M3 3.500h6v13H4.500A1.500 1.500 0 0 1 3 15zM3 10h14v5a1.500 1.500 0 0 1-1.500 1.500H9M13.500 2.500v5M11 5h5.500", "#777")}
                ${line(20, "M2.500 16L8 3.500 13.500 16M4.500 11.500h7M12.500 5c1 .8 1.300 2 1 3.500M14 2.500c2 1.500 2.700 4 2 7", "#777", "0 0 20 20", 1.100)}
                ${line(20, "M10 2.500l2.300 4.900 5.200.7-3.800 3.700 1 5.300-4.700-2.500-4.700 2.500 1-5.300L2.500 8.100l5.200-.7z", "#777")}
              </div>
            </div>
            <div class="tools">
              <button type="button" aria-label="Extensions">${line(18, "M3.500 3.500H7a2.200 2.200 0 0 1 4.300 0H15V7a2.200 2.200 0 0 0 0 4.300V15.500h-3.700a2.200 2.200 0 0 1-4.300 0H3.500v-4.200a2.200 2.200 0 0 1 0-4.300z", "#1b1b1b", "0 0 18 18", 1.200)}</button>
              <span class="sep"></span>
              <button type="button" aria-label="Split screen">${line(18, "M7 3.500H3.500a1.500 1.500 0 0 0-1.500 1.500v8a1.500 1.500 0 0 0 1.500 1.500H7M11 3.500h3.500A1.500 1.500 0 0 1 16 5v8a1.500 1.500 0 0 1-1.500 1.500H11M9 1v16", "#1b1b1b", "0 0 18 18", 1.200)}</button>
              <button type="button" aria-label="Favourites">${line(18, "M10.500 6.500L8 1.500 5.800 6l-5 .7 3.600 3.500-.9 5.300L8 13M11 7h6M10 10.500h7M11.500 14H17", "#1b1b1b", "0 0 18 18", 1.200)}</button>
              <button type="button" aria-label="Collections">${line(20, "M7.500 7h8a2 2 0 0 1 2 2v6.500a2 2 0 0 1-2 2h-7a2 2 0 0 1-2-2V8M12 9.500v5.500M9.300 12.200h5.500M4.500 13.500l-1.700-6A2 2 0 0 1 4 5l7-2a2 2 0 0 1 2.500 1.300l.5 1.500", "#1b1b1b")}</button>
              <button type="button" aria-label="Browser essentials">${icon(20, 20, "0 0 20 20", svg`<path d="M2.500 8.500c-1.500-4.500 4-7.500 7-3.500 3-4 8.500-1 7 3.500M1 10h4l2-3.500 3 6 2-3.500h5M4.500 12.500L9.500 17" stroke="#1b1b1b" stroke-width="1.200" stroke-linejoin="round"/><circle cx="14.500" cy="14.500" r="4" fill="#107c10"/><path d="M12.700 14.500l1.300 1.300 2.300-2.500" stroke="#fff"/>`)}</button>
              <button type="button" aria-label="More">${icon(16, 16, "0 0 16 16", svg`<g fill="#1b1b1b"><circle cx="2.500" cy="8" r="1.200"/><circle cx="8" cy="8" r="1.200"/><circle cx="13.500" cy="8" r="1.200"/></g>`)}</button>
            </div>
          </div>
          <div class="bookmarks">
            ${bm.map(([name, ic]) => html`<a href="#">${ic}<span>${name}</span></a>`)}
            <button type="button" aria-label="More bookmarks">${line(14, "M4.500 1.500L10.500 7l-6 5.500", "#1b1b1b", "0 0 14 14", 1.200)}</button>
          </div>
          <aspireo-page></aspireo-page>
        </div>
        <div class="side">
          <button class="copilot" type="button" aria-label="Copilot">${copilot(24, ["#199ae8", "#4fd18a", "#1bb8e8", "#2257df", "#0a6cc0"])}</button>
          ${side.map((s) => html`<button type="button" aria-label="Sidebar app">${s}</button>`)}
          <div class="rule first"></div>
          <button type="button" aria-label="Customise">${line(14, "M7 1.500v11M1.500 7h11", "#1b1b1b", "0 0 14 14", 1.100)}</button>
          <div class="rule last"></div>
          <button type="button" aria-label="Settings">${icon(18, 18, "0 0 18 18", svg`<path d="M7.300 1.500h3.400l.5 2.200 1.300.8 2.200-.7 1.700 3-1.600 1.500v1.500l1.600 1.500-1.700 3-2.200-.7-1.300.8-.5 2.200H7.300l-.5-2.200-1.300-.8-2.200.7-1.700-3 1.600-1.500V8.300L1.600 6.800l1.700-3 2.200.7 1.300-.8z" stroke="#1b1b1b" stroke-width="1.200" stroke-linejoin="round"/><circle cx="9" cy="9" r="2" stroke="#1b1b1b" stroke-width="1.200"/>`)}</button>
        </div>
      </div>
      <task-bar></task-bar>`;
  }
}
